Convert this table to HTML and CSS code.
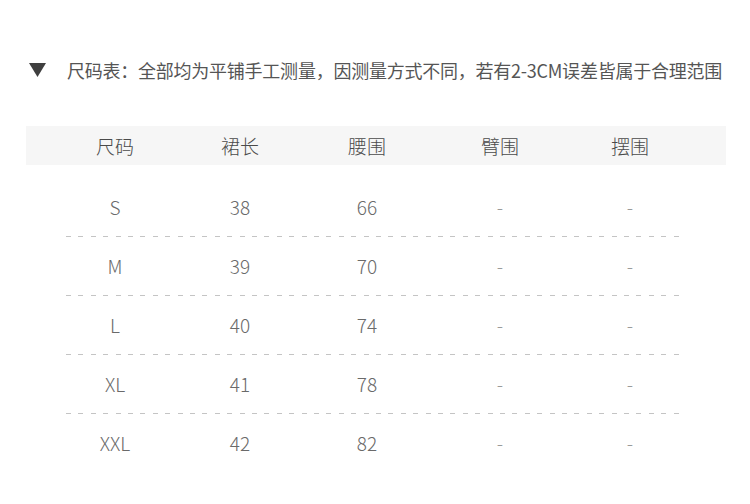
FILE: index.html
```html
<!DOCTYPE html>
<html lang="zh">
<head>
<meta charset="utf-8">
<link rel="stylesheet" href="styles.css">
</head>
<body>
<div class="page">
  <div class="title">
    <svg class="tri" width="17" height="14" viewBox="0 0 17 14"><polygon points="0,0 17,0 8.5,14" fill="#3f3f3f"/></svg>
    <span class="title-text">尺码表：全部均为平铺手工测量，因测量方式不同，若有2-3CM误差皆属于合理范围</span>
  </div>
  <div class="table">
    <div class="head">
      <div>尺码</div><div>裙长</div><div>腰围</div><div>臂围</div><div>摆围</div>
    </div>
    <div class="row"><div>S</div><div>38</div><div>66</div><div class="dash">-</div><div class="dash">-</div></div>
    <div class="divider"></div>
    <div class="row"><div>M</div><div>39</div><div>70</div><div class="dash">-</div><div class="dash">-</div></div>
    <div class="divider"></div>
    <div class="row"><div>L</div><div>40</div><div>74</div><div class="dash">-</div><div class="dash">-</div></div>
    <div class="divider"></div>
    <div class="row"><div>XL</div><div>41</div><div>78</div><div class="dash">-</div><div class="dash">-</div></div>
    <div class="divider"></div>
    <div class="row"><div>XXL</div><div>42</div><div>82</div><div class="dash">-</div><div class="dash">-</div></div>
  </div>
</div>
</body>
</html>
```
FILE: styles.css
```css
html, body {
  margin: 0;
  padding: 0;
  background: #ffffff;
}
body {
  font-family: "Noto Sans CJK SC", "Noto Sans", sans-serif;
  width: 750px;
  height: 504px;
  overflow: hidden;
}
.page {
  padding-top: 59px;
}
.title {
  display: flex;
  align-items: center;
  height: 22px;
  padding-left: 29px;
}
.tri {
  margin-right: 21px;
  flex: none;
}
.title-text {
  font-size: 18px;
  color: #555555;
  white-space: nowrap;
  letter-spacing: -0.24px;
}
.table {
  margin-top: 45px;
  margin-left: 26px;
  width: 700px;
}
.head, .row {
  display: grid;
  grid-template-columns: 126px 124px 130px 136px 124px;
  padding-left: 26px;
  align-items: center;
  text-align: center;
}
.head {
  height: 39px;
  background: #f6f6f6;
  font-size: 19px;
  font-weight: 300;
  color: #4a4a4a;
  margin-bottom: 13px;
}
.row {
  height: 56px;
  padding-bottom: 2px;
  font-size: 19px;
  font-weight: 300;
  color: #6a6a6a;
}
.row .dash {
  color: #9a9a9a;
}
.divider {
  height: 1px;
  margin: 0 42px 0 40px;
  background-image: repeating-linear-gradient(to right, #c4c4c4 0, #c4c4c4 5px, transparent 5px, transparent 12.4px);
}
```
